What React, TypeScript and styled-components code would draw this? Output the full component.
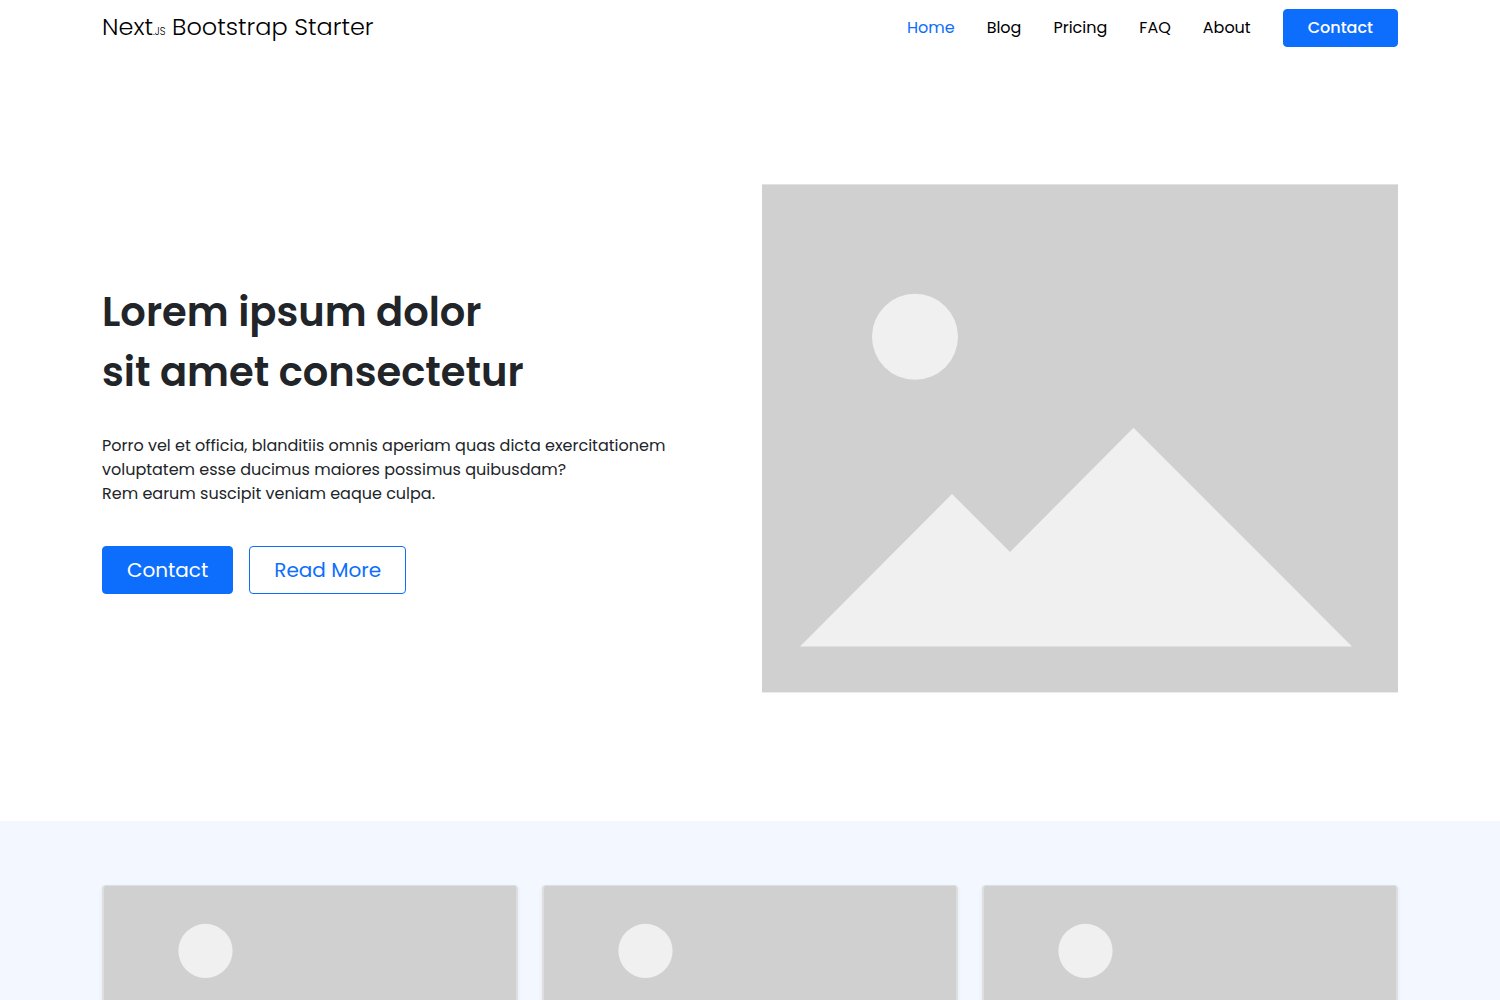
import React from 'react';
import styled, { createGlobalStyle } from 'styled-components';

const GlobalStyle = createGlobalStyle`
  *, *::before, *::after { box-sizing: border-box; }
  body {
    margin: 0;
    background: #fff;
    color: #212529;
    font-family: Poppins, Inter, sans-serif;
    font-size: 16px;
    line-height: 24px;
  }
  h1, p { margin: 0; }
  a { color: inherit; text-decoration: none; }
`;

const Container = styled.div`
  width: 100%;
  max-width: 1320px;
  margin: 0 auto;
  padding: 0 12px;
`;

const HeaderRow = styled(Container)`
  display: flex;
  align-items: center;
  justify-content: space-between;
  min-height: 56px;
`;

const Brand = styled.a`
  padding-bottom: 2px;
  color: #000;
  font-size: 24px;
  font-weight: 300;
  line-height: 32px;
  white-space: nowrap;
`;

const BrandSuffix = styled.small`
  font-size: 10px;
  line-height: 1;
`;

const Nav = styled.nav`
  display: flex;
  align-items: center;
  gap: 32px;
`;

const NavLink = styled.a<{ $active?: boolean }>`
  color: ${({ $active }) => ($active ? '#0d6efd' : '#000')};
`;

const Button = styled.button<{ $large?: boolean; $outline?: boolean }>`
  padding: ${({ $large }) => ($large ? '8px 24px' : '6px 24px')};
  border: 1px solid #0d6efd;
  border-radius: 4px;
  background: ${({ $outline }) => ($outline ? 'transparent' : '#0d6efd')};
  color: ${({ $outline }) => ($outline ? '#0d6efd' : '#fff')};
  font-family: inherit;
  font-size: ${({ $large }) => ($large ? '20px' : '16px')};
  font-weight: ${({ $large }) => ($large ? 400 : 500)};
  line-height: ${({ $large }) => ($large ? '30px' : '24px')};
  cursor: pointer;
`;

const Hero = styled(Container)`
  display: grid;
  grid-template-columns: 1fr 1fr;
  align-items: center;
  gap: 24px;
  padding-top: 128px;
  padding-bottom: 128px;
`;

const Title = styled.h1`
  margin-bottom: 32px;
  font-size: 40px;
  font-weight: 600;
  line-height: 60px;
`;

const Lead = styled.p`
  margin-bottom: 40px;
`;

const Actions = styled.div`
  display: flex;
  gap: 16px;
`;

const Picture = styled.svg`
  display: block;
  width: 100%;
  height: auto;
`;

const Features = styled.section`
  background: #f3f7ff;
  padding: 64px 0;
`;

const Cards = styled(Container)`
  display: grid;
  grid-template-columns: repeat(3, 1fr);
  gap: 24px;
`;

const Card = styled.article`
  overflow: hidden;
  border: solid #dedede;
  border-width: 1px 2px;
  border-radius: 4px;
  background: #d0d0d0;
  box-shadow: 0 2px 4px rgba(0, 0, 0, 0.075);
`;

const navItems = ['Home', 'Blog', 'Pricing', 'FAQ', 'About'];

function Landscape() {
  return (
    <g fill="#f0f0f0">
      <circle cx="153" cy="152.800" r="43" />
      <path d="M38 462.400 190 310l58 58L371.500 243.800 590 462.400Z" />
    </g>
  );
}

export default function App() {
  return (
    <>
      <GlobalStyle />
      <header>
        <HeaderRow>
          <Brand href="#">
            Next<BrandSuffix>.JS</BrandSuffix> Bootstrap Starter
          </Brand>
          <Nav>
            {navItems.map((item, i) => (
              <NavLink key={item} href="#" $active={i === 0}>{item}</NavLink>
            ))}
            <Button type="button">Contact</Button>
          </Nav>
        </HeaderRow>
      </header>
      <main>
        <Hero>
          <div>
            <Title>Lorem ipsum dolor<br />sit amet consectetur</Title>
            <Lead>
              Porro vel et officia, blanditiis omnis aperiam quas dicta exercitationem
              <br />voluptatem esse ducimus maiores possimus quibusdam?
              <br />Rem earum suscipit veniam eaque culpa.
            </Lead>
            <Actions>
              <Button type="button" $large>Contact</Button>
              <Button type="button" $large $outline>Read More</Button>
            </Actions>
          </div>
          <Picture viewBox="0 0 636 508.8" aria-hidden="true">
            <rect y="0.4" width="636" height="508" fill="#d0d0d0" />
            <Landscape />
          </Picture>
        </Hero>
        <Features>
          <Cards>
            {[0, 1, 2].map((n) => (
              <Card key={n}>
                <Picture viewBox="0 0 412 275" aria-hidden="true">
                  <g transform="translate(5.1 -31.3) scale(0.63)"><Landscape /></g>
                </Picture>
              </Card>
            ))}
          </Cards>
        </Features>
      </main>
    </>
  );
}
